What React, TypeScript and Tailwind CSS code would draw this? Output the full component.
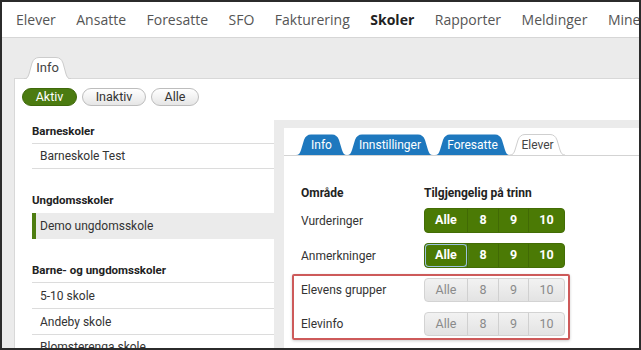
import React from "react";

const navItems = ["Elever", "Ansatte", "Foresatte", "SFO", "Fakturering", "Skoler", "Rapporter", "Meldinger", "Mine sider"];

const TabShape = ({ w, h, fill, stroke }: { w: number; h: number; fill: string; stroke?: string }) => {
  const d = `M0 ${h} C3 ${h} 4 ${h - 2} 5 ${h - 5} L8 6 Q10 0.5 15 0.5 L${w - 15} 0.5 Q${w - 10} 0.5 ${w - 8} 6 L${w - 5} ${h - 5} C${w - 4} ${h - 2} ${w - 3} ${h} ${w} ${h}`;
  return (
    <svg width={w} height={h} className="absolute inset-0" viewBox={`0 0 ${w} ${h}`}>
      <path d={d + " Z"} fill={fill} />
      {stroke && <path d={d} fill="none" stroke={stroke} strokeWidth="1" />}
    </svg>
  );
};

const Tab = ({ label, w, active }: { label: string; w: number; active?: boolean }) => (
  <div className="relative h-[21px] flex items-center justify-center" style={{ width: w }}>
    <TabShape w={w} h={21} fill={active ? "#ffffff" : "#1e78be"} stroke={active ? "#cfcfcf" : undefined} />
    <span className={`relative text-[12px] ${active ? "text-[#444]" : "text-white"}`}>{label}</span>
  </div>
);

const cells = [
  { label: "Alle", w: "w-[42px]" },
  { label: "8", w: "w-[31px]" },
  { label: "9", w: "w-[30px]" },
  { label: "10", w: "w-[36px]" },
];

const Group = ({ on, focus }: { on?: boolean; focus?: boolean }) => (
  <div
    className={`flex rounded-[4px] overflow-hidden ${
      on ? "h-[25px] bg-[#4b7a05] border border-[#436d05]" : "h-[24px] bg-gradient-to-b from-[#f2f2f2] to-[#e3e3e3] border border-[#d3d3d3]"
    }`}
  >
    {cells.map((c, i) => (
      <div
        key={c.label}
        className={`${c.w} flex items-center justify-center text-[12.5px] ${i > 0 ? (on ? "border-l border-[#416a04]" : "border-l border-[#d0d0d0]") : ""} ${
          on ? "text-white font-bold" : "text-[#8a8a8a]"
        } ${focus && i === 0 ? "rounded-[4px] shadow-[inset_0_0_0_1px_#9cc3e0,0_0_3px_#7fb0d8]" : ""}`}
      >
        {c.label}
      </div>
    ))}
  </div>
);

const Row = ({ label, on, focus, h }: { label: string; on?: boolean; focus?: boolean; h: string }) => (
  <div className={`flex items-center ${h}`}>
    <div className="w-[123px] text-[12px] text-[#333]">{label}</div>
    <Group on={on} focus={focus} />
  </div>
);

const App = () => {
  return (
    <div className="w-[641px] h-[350px] overflow-hidden border-2 border-[#2b2b2b] bg-[#ebebeb] flex flex-col font-['Roboto',sans-serif]">
      <div className="h-[36px] shrink-0 bg-white border-b border-[#d6d6d6] flex items-center gap-[20.5px] pl-[14px] whitespace-nowrap font-['Open_Sans',sans-serif]">
        {navItems.map((n) => (
          <span key={n} className={`text-[14px] ${n === "Skoler" ? "font-bold text-[#222]" : "text-[#555]"}`}>
            {n}
          </span>
        ))}
      </div>

      <div className="flex-1 flex flex-col pl-[12px] pt-[19px] min-h-0">
        <div className="pl-[10px] relative z-10 -mb-px">
          <div className="relative w-[47px] h-[22px] flex items-center justify-center">
            <TabShape w={47} h={22} fill="#ffffff" stroke="#cccccc" />
            <span className="relative text-[13px] text-[#444]">Info</span>
          </div>
        </div>

        <div className="flex-1 bg-white border-t border-l border-[#d8d8d8] flex flex-col min-h-0">
          <div className="flex gap-[5px] pl-[7px] pt-[9px]">
            <div className="w-[55px] h-[18px] rounded-full bg-[#4b7b10] border border-[#3f690b] text-white text-[12.5px] flex items-center justify-center">Aktiv</div>
            <div className="w-[64px] h-[18px] rounded-full bg-gradient-to-b from-white to-[#e6e6e6] border border-[#bdbdbd] text-[#333] text-[12.5px] flex items-center justify-center">Inaktiv</div>
            <div className="w-[48px] h-[18px] rounded-full bg-gradient-to-b from-white to-[#e6e6e6] border border-[#bdbdbd] text-[#333] text-[12.5px] flex items-center justify-center">Alle</div>
          </div>

          <div className="flex mt-[14px] flex-1 min-h-0">
            <div className="w-[259px] pl-[17px] shrink-0 text-[12px]">
              <div className="h-[24px] flex items-center font-bold text-[11.5px] text-[#222] border-b border-[#dcdcdc]">Barneskoler</div>
              <div className="h-[25px] flex items-center pl-[8px] text-[#333] border-b border-[#dcdcdc]">Barneskole Test</div>
              <div className="h-[20px]" />
              <div className="h-[24px] flex items-center font-bold text-[11.5px] text-[#222]">Ungdomsskoler</div>
              <div className="h-[26px] flex items-center pl-[4px] text-[#333] bg-[#ebebeb] border-l-4 border-[#4e7d10]">Demo ungdomsskole</div>
              <div className="h-[21px]" />
              <div className="h-[23px] flex items-center font-bold text-[11.5px] text-[#222] border-b border-[#dcdcdc]">Barne- og ungdomsskoler</div>
              <div className="h-[26px] flex items-center pl-[8px] text-[#333] border-b border-[#dcdcdc]">5-10 skole</div>
              <div className="h-[26px] flex items-center pl-[8px] text-[#333] border-b border-[#dcdcdc]">Andeby skole</div>
              <div className="h-[24px] flex items-center pl-[8px] text-[#333]">Blomsterenga skole</div>
            </div>

            <div className="flex-1 bg-[#ebebeb] pl-[10px] pt-[8px] flex flex-col">
              <div className="flex-1 bg-white flex flex-col">
                <div className="pt-[6px] border-b border-[#d3d3d3] pl-[12px] flex">
                  <Tab label="Info" w={51} />
                  <Tab label="Innstillinger" w={86} />
                  <div className="w-[2px]" />
                  <Tab label="Foresatte" w={75} />
                  <Tab label="Elever" w={55} active />
                </div>

                <div className="pl-[8px] pt-[28px]">
                  <div className="w-[278px]">
                    <div className="flex items-center h-[18px] pl-[9px] text-[12px] font-bold text-[#222]">
                      <div className="w-[123px]">Område</div>
                      <div>Tilgjengelig på trinn</div>
                    </div>
                    <div className="pl-[9px] mt-[6px] flex flex-col gap-[10px]">
                      <Row label="Vurderinger" on h="h-[25px]" />
                      <Row label="Anmerkninger" on focus h="h-[25px]" />
                    </div>
                    <div className="mt-[6px] border-2 border-[#cd5a5a] rounded-[2px] shadow-[0_1px_3px_rgba(0,0,0,0.2)] pl-[7px] py-[2px] flex flex-col gap-[10px]">
                      <Row label="Elevens grupper" h="h-[24px]" />
                      <Row label="Elevinfo" h="h-[24px]" />
                    </div>
                  </div>
                </div>
              </div>
            </div>
          </div>
        </div>
      </div>
    </div>
  );
};

export default App;
